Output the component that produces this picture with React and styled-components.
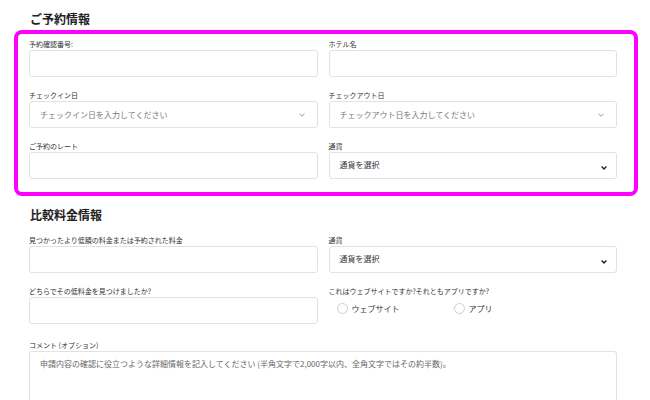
import React from 'react';
import styled, { createGlobalStyle } from 'styled-components';

const GlobalStyle = createGlobalStyle`
  html, body {
    margin: 0;
    padding: 0;
    background: #fff;
  }
  body {
    font-family: "Noto Sans CJK JP", "Noto Sans", sans-serif;
    color: #222;
  }
  * {
    box-sizing: border-box;
  }
`;

const Page = styled.div`
  width: 650px;
  padding: 11px 33px 0 29px;
`;

const SectionTitle = styled.h2`
  margin: ${p => p.$top || 0}px 0 ${p => p.$bottom || 0}px 1px;
  font-size: 12px;
  line-height: 16px;
  font-weight: 700;
  color: #222;
`;

const Highlight = styled.div`
  margin: 0 -21px 0 -15px;
  padding: 4px 17px 13px 11px;
  border: 4px solid #f0f;
  border-radius: 8px;
`;

const FieldGrid = styled.div`
  display: grid;
  grid-template-columns: 1fr 1fr;
  column-gap: 11px;
  row-gap: 12px;
`;

const Field = styled.div`
  display: flex;
  flex-direction: column;
`;

const Label = styled.label`
  display: block;
  font-size: 7px;
  line-height: 12px;
  color: #333;
  white-space: nowrap;
`;

const TextInput = styled.input`
  display: block;
  width: 100%;
  height: 27px;
  margin: 0;
  border: 1px solid #e2e2e2;
  border-radius: 3px;
  background: #fff;
  outline: none;
`;

const SelectBox = styled.div`
  display: flex;
  align-items: center;
  justify-content: space-between;
  height: 27px;
  padding: 0 ${p => (p.$bold ? 9 : 12)}px 0 10px;
  border: 1px solid #e2e2e2;
  border-radius: 3px;
  background: #fff;
  font-size: 8px;
  color: ${p => (p.$bold ? '#333' : '#7a7a7a')};
`;

const SelectText = styled.span`
  margin-top: ${p => (p.$bold ? -3 : 0)}px;
`;

const RadioGroup = styled.div`
  display: flex;
  align-items: center;
  height: 22px;
  padding-left: 8px;
`;

const RadioItem = styled.label`
  display: flex;
  align-items: center;
  gap: 4px;
  width: 117px;
  font-size: 8px;
  color: #333;
`;

const RadioCircle = styled.span`
  width: 11px;
  height: 11px;
  border: 1px solid #cfcfcf;
  border-radius: 50%;
  background: #fff;
`;

const CommentField = styled(Field)`
  margin-top: 15px;
`;

const TextArea = styled.textarea`
  display: block;
  width: 100%;
  height: 80px;
  margin: 0;
  padding: 6px 10px;
  border: 1px solid #e2e2e2;
  border-radius: 3px;
  resize: none;
  font-family: inherit;
  font-size: 8px;
  line-height: 12px;
  outline: none;
  &::placeholder {
    color: #666;
  }
`;

const ThinChevron = () => (
  <svg width="6" height="4" viewBox="0 0 6 4">
    <path d="M0.5 0.8 L3 3.2 L5.5 0.8" fill="none" stroke="#777" strokeWidth="0.8" />
  </svg>
);

const BoldChevron = () => (
  <svg width="6" height="4" viewBox="0 0 6 4" style={{ marginTop: 4 }}>
    <path d="M0.6 0.6 L3 3 L5.4 0.6" fill="none" stroke="#222" strokeWidth="1.4" />
  </svg>
);

const Select = ({ text, bold }) => (
  <SelectBox $bold={bold}>
    <SelectText $bold={bold}>{text}</SelectText>
    {bold ? <BoldChevron /> : <ThinChevron />}
  </SelectBox>
);

const App = () => (
  <>
    <GlobalStyle />
    <Page>
      <SectionTitle $bottom={3}>ご予約情報</SectionTitle>
      <Highlight>
        <FieldGrid>
          <Field>
            <Label>予約確認番号:</Label>
            <TextInput />
          </Field>
          <Field>
            <Label>ホテル名</Label>
            <TextInput />
          </Field>
          <Field>
            <Label>チェックイン日</Label>
            <Select text="チェックイン日を入力してください" />
          </Field>
          <Field>
            <Label>チェックアウト日</Label>
            <Select text="チェックアウト日を入力してください" />
          </Field>
          <Field>
            <Label>ご予約のレート</Label>
            <TextInput />
          </Field>
          <Field>
            <Label>通貨</Label>
            <Select text="通貨を選択" bold />
          </Field>
        </FieldGrid>
      </Highlight>

      <SectionTitle $top={11} $bottom={11}>比較料金情報</SectionTitle>
      <FieldGrid>
        <Field>
          <Label>見つかったより低額の料金または予約された料金</Label>
          <TextInput />
        </Field>
        <Field>
          <Label>通貨</Label>
          <Select text="通貨を選択" bold />
        </Field>
        <Field>
          <Label>どちらでその低料金を見つけましたか?</Label>
          <TextInput />
        </Field>
        <Field>
          <Label>これはウェブサイトですか?それともアプリですか?</Label>
          <RadioGroup>
            <RadioItem>
              <RadioCircle />
              ウェブサイト
            </RadioItem>
            <RadioItem>
              <RadioCircle />
              アプリ
            </RadioItem>
          </RadioGroup>
        </Field>
      </FieldGrid>
      <CommentField>
        <Label>コメント (オプション)</Label>
        <TextArea placeholder="申請内容の確認に役立つような詳細情報を記入してください (半角文字で2,000字以内、全角文字ではその約半数)。" />
      </CommentField>
    </Page>
  </>
);

export default App;
